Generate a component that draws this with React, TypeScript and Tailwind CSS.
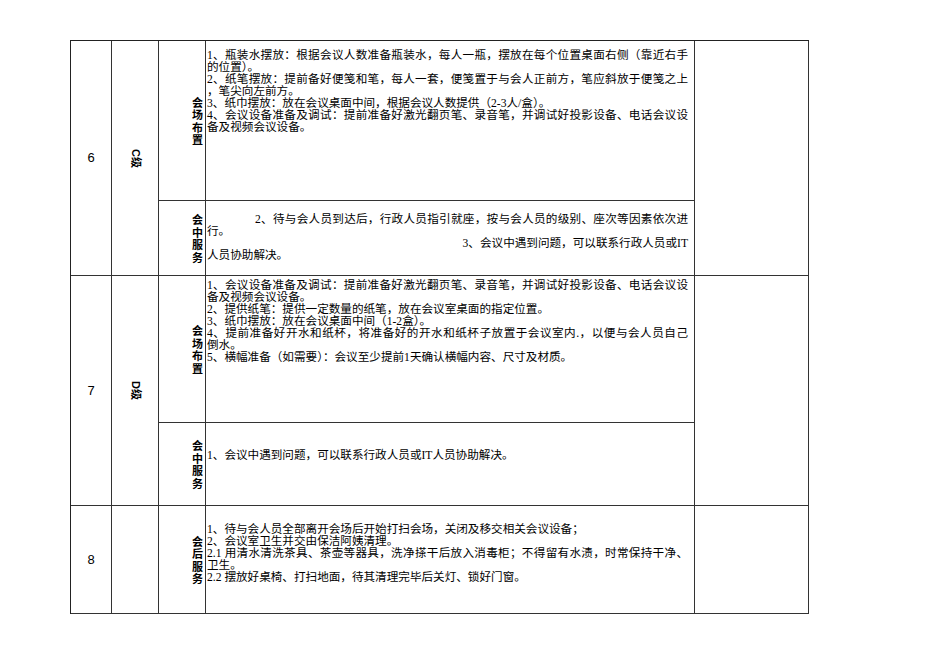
import React from 'react'

type Line = { t: string; full?: boolean; right?: boolean; indent?: boolean }

// vertical bold label, one char per line, pinned to the cell's right edge
function Label({ text }: { text: string }) {
  return (
    <div className="flex h-full flex-col items-end justify-center border-r border-b border-[#333] pr-[2px] font-['Noto_Sans_CJK_SC',sans-serif] text-[11px] leading-[12.5px] font-bold text-black">
      {text.split('').map((c, i) => (
        <span key={i} className="block h-[12.5px]">
          {c}
        </span>
      ))}
    </div>
  )
}

function Content({ lines, pad }: { lines: Line[]; pad: string }) {
  return (
    <div className={`border-r border-b border-[#333] pl-[1px] pr-[6px] font-['Liberation_Serif','Noto_Sans_CJK_SC',serif] text-[11.6px] leading-[12px] text-black ${pad}`}>
      {lines.map((l, i) => (
        <div
          key={i}
          className={
            l.full
              ? 'whitespace-nowrap text-justify [text-align-last:justify]'
              : l.right
                ? 'whitespace-nowrap text-right'
                : 'whitespace-nowrap'
          }
          style={l.indent ? { paddingLeft: 48 } : undefined}
        >
          {l.t}
        </div>
      ))}
    </div>
  )
}

function Num({ n, span }: { n: string; span: string }) {
  return (
    <div className={`${span} flex items-center justify-center border-r border-b border-[#333] font-['Liberation_Sans',sans-serif] text-[13px] text-black`}>
      {n}
    </div>
  )
}

function Level({ text, span }: { text: string; span: string }) {
  return (
    <div className={`${span} flex items-center justify-center border-r border-b border-[#333]`}>
      <span className="font-['Liberation_Sans','Noto_Sans_CJK_SC',sans-serif] text-[11px] leading-[11px] font-bold text-black [writing-mode:vertical-rl] [text-orientation:sideways]">
        {text}
      </span>
    </div>
  )
}

const row6a: Line[] = [
  { t: '1、瓶装水摆放：根据会议人数准备瓶装水，每人一瓶，摆放在每个位置桌面右侧（靠近右手', full: true },
  { t: '的位置）。' },
  { t: '2、纸笔摆放：提前备好便笺和笔，每人一套，便笺置于与会人正前方，笔应斜放于便笺之上', full: true },
  { t: '，笔尖向左前方。' },
  { t: '3、纸巾摆放：放在会议桌面中间，根据会议人数提供（2-3人/盒）。' },
  { t: '4、会议设备准备及调试：提前准备好激光翻页笔、录音笔，并调试好投影设备、电话会议设', full: true },
  { t: '备及视频会议设备。' },
]

const row6b: Line[] = [
  { t: '2、待与会人员到达后，行政人员指引就座，按与会人员的级别、座次等因素依次进', full: true, indent: true },
  { t: '行。' },
  { t: '3、会议中遇到问题，可以联系行政人员或IT', right: true },
  { t: '人员协助解决。' },
]

const row7a: Line[] = [
  { t: '1、会议设备准备及调试：提前准备好激光翻页笔、录音笔，并调试好投影设备、电话会议设', full: true },
  { t: '备及视频会议设备。' },
  { t: '2、提供纸笔：提供一定数量的纸笔，放在会议室桌面的指定位置。' },
  { t: '3、纸巾摆放：放在会议桌面中间（1-2盒）。' },
  { t: '4、提前准备好开水和纸杯，将准备好的开水和纸杯子放置于会议室内.，以便与会人员自己', full: true },
  { t: '倒水。' },
  { t: '5、横幅准备（如需要）：会议至少提前1天确认横幅内容、尺寸及材质。' },
]

const row7b: Line[] = [{ t: '1、会议中遇到问题，可以联系行政人员或IT人员协助解决。' }]

const row8: Line[] = [
  { t: '1、待与会人员全部离开会场后开始打扫会场，关闭及移交相关会议设备；' },
  { t: '2、会议室卫生并交由保洁阿姨清理。' },
  { t: '2.1 用清水清洗茶具、茶壶等器具，洗净搽干后放入消毒柜；不得留有水渍，时常保持干净、', full: true },
  { t: '卫生。' },
  { t: '2.2 摆放好桌椅、打扫地面，待其清理完毕后关灯、锁好门窗。' },
]

export default function App() {
  return (
    <div className="min-h-[672px] w-[950px] bg-white pt-[40px] pl-[70px]">
      <div className="w-fit border-t border-l border-[#222]">
        {/* 6 */}
        <div className="grid grid-cols-[41px_47px_47px_489px_114px] grid-rows-[160px_75px]">
          <Num n="6" span="row-span-2" />
          <Level text="C级" span="row-span-2" />
          <Label text="会场布置" />
          <Content lines={row6a} pad="pt-[9px] leading-[12.2px]" />
          <div className="row-span-2 border-r border-b border-[#333]" />
          <Label text="会中服务" />
          <Content lines={row6b} pad="pt-[13px] leading-[12.7px]" />
        </div>

        {/* 7 */}
        <div className="grid grid-cols-[41px_47px_47px_489px_114px] grid-rows-[147px_83px]">
          <Num n="7" span="row-span-2" />
          <Level text="D级" span="row-span-2" />
          <Label text="会场布置" />
          <Content lines={row7a} pad="pt-[4px] leading-[11.9px]" />
          <div className="row-span-2 border-r border-b border-[#333]" />
          <Label text="会中服务" />
          <Content lines={row7b} pad="pt-[27px]" />
        </div>

        {/* 8 */}
        <div className="grid grid-cols-[41px_47px_47px_489px_114px] grid-rows-[108px]">
          <Num n="8" span="" />
          <div className="border-r border-b border-[#333]" />
          <Label text="会后服务" />
          <Content lines={row8} pad="pt-[18px] text-[11.6px] leading-[12.4px]" />
          <div className="border-r border-b border-[#333]" />
        </div>
      </div>
    </div>
  )
}
